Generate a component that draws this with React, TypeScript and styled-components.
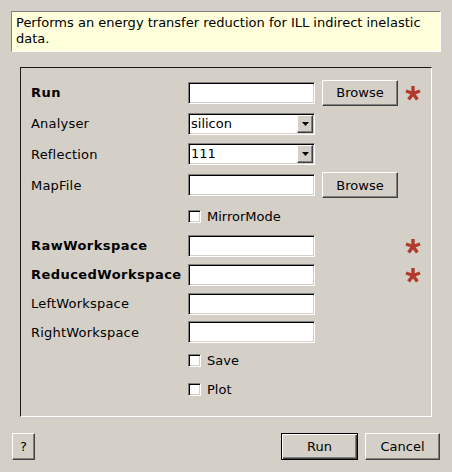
import React from "react";
import styled, { createGlobalStyle, css } from "styled-components";

const Global = createGlobalStyle`
  html, body { margin: 0; padding: 0; background: #d4d0c8; }
  body {
    font-family: "DejaVu Sans", "Liberation Sans", sans-serif;
    font-size: 13px;
    color: #000;
  }
  * { box-sizing: border-box; }
`;

const Dialog = styled.div`
  width: 452px;
  height: 472px;
  padding: 11px 11px 12px 11px;
  display: flex;
  flex-direction: column;
`;

const Description = styled.div`
  height: 41px;
  background: #ffffdc;
  border: 1px solid;
  border-color: #808080 #ffffff #ffffff #808080;
  padding: 3px 4px;
  line-height: 16px;
  white-space: nowrap;
`;

const GroupBox = styled.div`
  margin: 15px 9px 0 9px;
  border: 1px solid;
  border-color: #1a1a1a #ffffff #ffffff #1a1a1a;
  padding: 9px 10px 13px 10px;
`;

const FormGrid = styled.div`
  display: grid;
  grid-template-columns: 150px 127px 76px 16px;
  grid-template-rows: 31px 31px 30px 32px 30px 29px 29px 29px 28px 29px 28px;
  column-gap: 7px;
  align-items: center;
`;

const Label = styled.div<{ $bold?: boolean }>`
  grid-column: 1;
  font-weight: ${(p) => (p.$bold ? "bold" : "normal")};
  letter-spacing: ${(p) => (p.$bold ? "0.45px" : "0.2px")};
  white-space: nowrap;
`;

const sunken = css`
  border: 1px solid;
  border-color: #808080 #ffffff #ffffff #808080;
  box-shadow: inset 1px 1px 0 #000, inset -1px -1px 0 #d4d0c8;
`;

const TextInput = styled.div`
  grid-column: 2;
  height: 22px;
  background: #fff;
  ${sunken}
`;

const Combo = styled.div`
  grid-column: 2;
  height: 22px;
  background: #fff;
  ${sunken}
  padding: 1px;
  display: flex;
  align-items: stretch;
`;

const ComboText = styled.div`
  flex: 1;
  padding-left: 1px;
  line-height: 18px;
`;

const ComboArrow = styled.div`
  width: 16px;
  background: #d4d0c8;
  border: 1px solid;
  border-color: #ffffff #404040 #404040 #ffffff;
  box-shadow: inset -1px -1px 0 #808080;
  display: flex;
  align-items: center;
  justify-content: center;
`;

const Button = styled.button<{ $default?: boolean; $h?: number; $w?: number }>`
  height: ${(p) => p.$h ?? 26}px;
  width: ${(p) => (p.$w ? `${p.$w}px` : "auto")};
  padding: 0;
  margin: 0;
  font-family: "DejaVu Sans", "Liberation Sans", sans-serif;
  font-size: 13px;
  color: #000;
  background: #d4d0c8;
  ${(p) =>
    p.$default
      ? css`
          border: 1px solid #000;
          box-shadow: inset 1px 1px 0 #fff, inset -1px -1px 0 #404040, inset -2px -2px 0 #808080;
        `
      : css`
          border: 1px solid;
          border-color: #ffffff #404040 #404040 #ffffff;
          box-shadow: inset -1px -1px 0 #808080;
        `}
`;

const BrowseButton = styled(Button)`
  grid-column: 3;
`;

const Required = styled.div`
  grid-column: 4;
  display: flex;
  align-items: center;
`;

const CheckRow = styled.label`
  grid-column: 2 / span 3;
  display: flex;
  align-items: center;
  gap: 6px;
  white-space: nowrap;
`;

const CheckBox = styled.span`
  width: 13px;
  height: 13px;
  background: #fff;
  ${sunken}
`;

const ButtonBar = styled.div`
  margin: 16px 1px 0 1px;
  display: flex;
  align-items: center;
  gap: 7px;
`;

const Spacer = styled.div`
  flex: 1;
`;

const Star = () => (
  <svg width="16" height="16" viewBox="0 0 16 16">
    <g stroke="#b23a2c" strokeWidth="3.4" strokeLinecap="butt">
      <line x1="8" y1="8.5" x2="8" y2="1" />
      <line x1="8" y1="8.5" x2="15" y2="6" />
      <line x1="8" y1="8.5" x2="12.4" y2="14.6" />
      <line x1="8" y1="8.5" x2="3.6" y2="14.6" />
      <line x1="8" y1="8.5" x2="1" y2="6" />
    </g>
  </svg>
);

const Arrow = () => (
  <svg width="7" height="4" viewBox="0 0 7 4">
    <polygon points="0,0 7,0 3.5,4" fill="#000" />
  </svg>
);

const ComboBox = ({ value }: { value: string }) => (
  <Combo>
    <ComboText>{value}</ComboText>
    <ComboArrow>
      <Arrow />
    </ComboArrow>
  </Combo>
);

const Check = ({ label }: { label: string }) => (
  <CheckRow>
    <CheckBox />
    {label}
  </CheckRow>
);

export default function App() {
  return (
    <>
      <Global />
      <Dialog>
        <Description>
          Performs an energy transfer reduction for ILL indirect inelastic
          <br />
          data.
        </Description>
        <GroupBox>
          <FormGrid>
            <Label $bold>Run</Label>
            <TextInput />
            <BrowseButton>Browse</BrowseButton>
            <Required>
              <Star />
            </Required>

            <Label>Analyser</Label>
            <ComboBox value="silicon" />

            <Label>Reflection</Label>
            <ComboBox value="111" />

            <Label>MapFile</Label>
            <TextInput />
            <BrowseButton>Browse</BrowseButton>

            <Check label="MirrorMode" />

            <Label $bold>RawWorkspace</Label>
            <TextInput />
            <Required>
              <Star />
            </Required>

            <Label $bold>ReducedWorkspace</Label>
            <TextInput />
            <Required>
              <Star />
            </Required>

            <Label>LeftWorkspace</Label>
            <TextInput />

            <Label>RightWorkspace</Label>
            <TextInput />

            <Check label="Save" />
            <Check label="Plot" />
          </FormGrid>
        </GroupBox>
        <ButtonBar>
          <Button $h={27} $w={23}>?</Button>
          <Spacer />
          <Button $default $h={27} $w={77}>Run</Button>
          <Button $h={27} $w={75}>Cancel</Button>
        </ButtonBar>
      </Dialog>
    </>
  );
}
